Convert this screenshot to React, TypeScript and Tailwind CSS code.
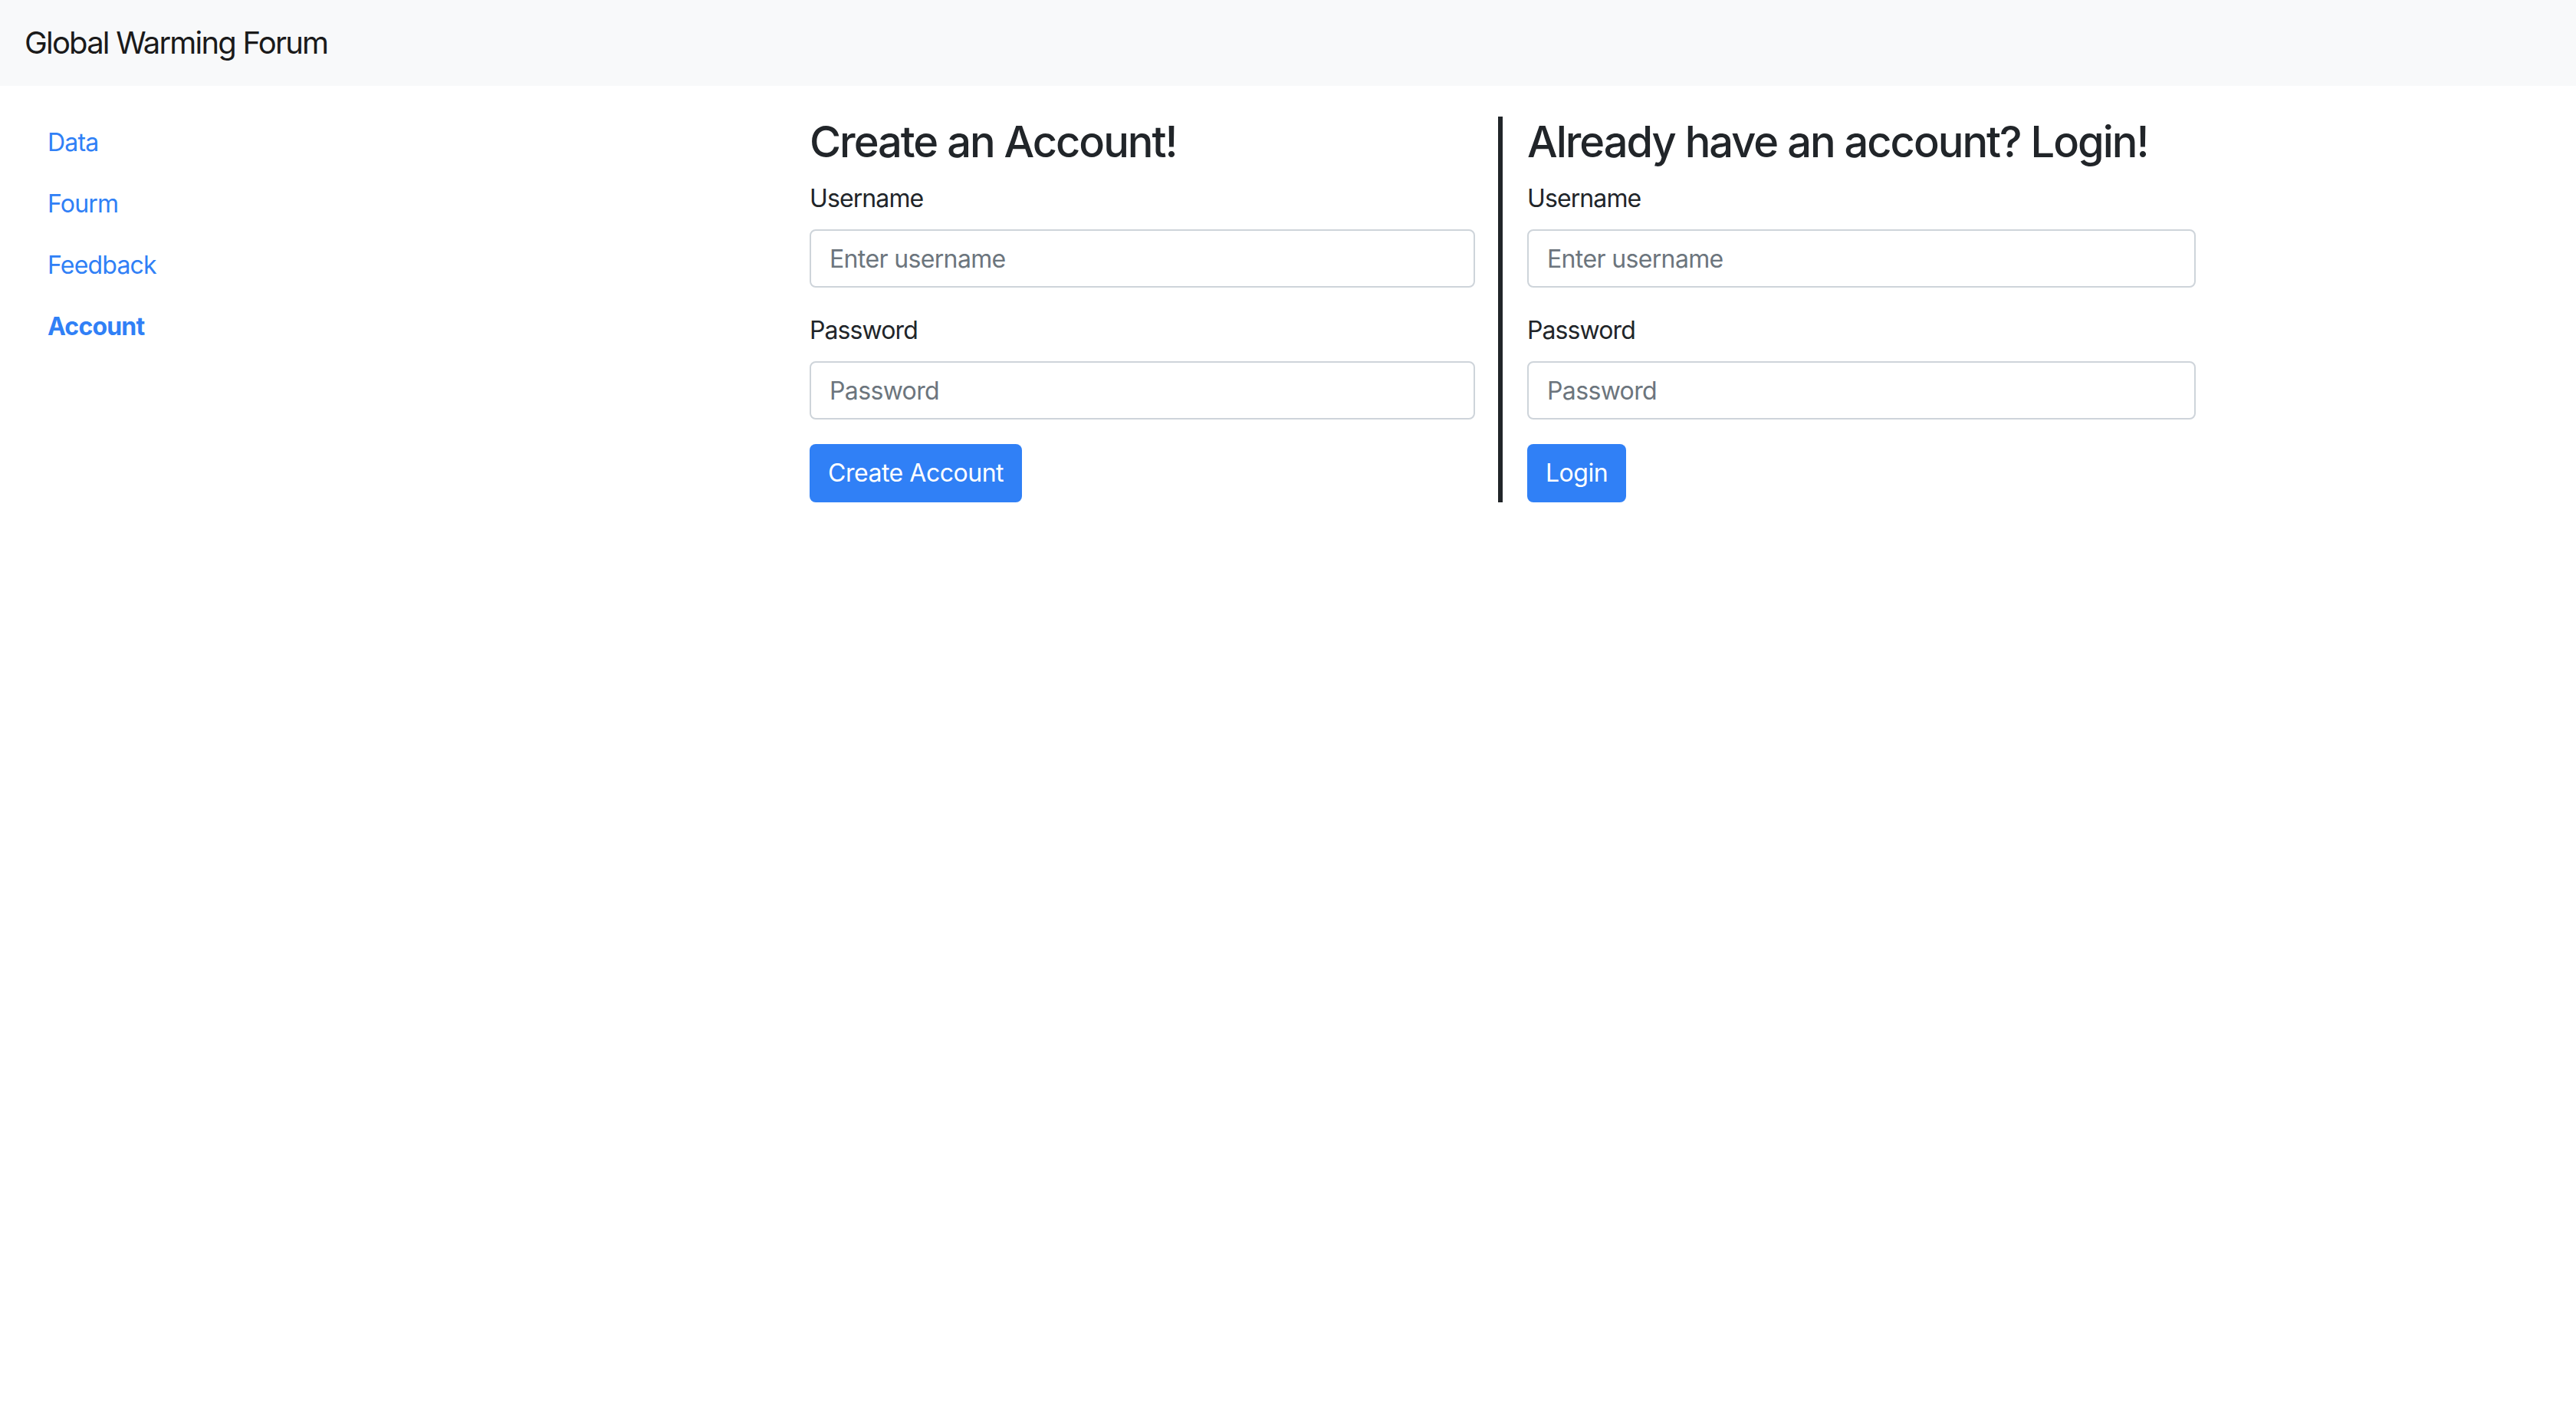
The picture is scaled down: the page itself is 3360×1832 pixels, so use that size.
import React, { useState } from "react";

const navLinks = ["Data", "Fourm", "Feedback", "Account"];

interface AuthFormProps {
  title: string;
  buttonLabel: string;
}

const AuthForm: React.FC<AuthFormProps> = ({ title, buttonLabel }) => {
  const [username, setUsername] = useState("");
  const [password, setPassword] = useState("");

  return (
    <form onSubmit={(e) => e.preventDefault()} className="flex flex-col">
      <h3 className="text-[56px] leading-[1.2] font-medium tracking-[-0.036em] text-[#212529] mb-[16px]">{title}</h3>
      <label className="text-[32px] leading-[48px] tracking-[-0.028em] text-[#212529] mb-[16px]">Username</label>
      <input
        type="text"
        placeholder="Enter username"
        value={username}
        onChange={(e) => setUsername(e.target.value)}
        className="h-[76px] w-full px-[24px] text-[32px] tracking-[-0.02em] text-[#495057] placeholder:text-[#6c757d] border-2 border-[#ced4da] rounded-[8px] outline-none mb-[32px]"
      />
      <label className="text-[32px] leading-[48px] tracking-[-0.028em] text-[#212529] mb-[16px]">Password</label>
      <input
        type="password"
        placeholder="Password"
        value={password}
        onChange={(e) => setPassword(e.target.value)}
        className="h-[76px] w-full px-[24px] text-[32px] tracking-[-0.02em] text-[#495057] placeholder:text-[#6c757d] border-2 border-[#ced4da] rounded-[8px] outline-none mb-[32px]"
      />
      <div>
        <button type="submit" className="h-[76px] px-[24px] text-[32px] tracking-[-0.015em] text-white bg-[#3080f6] rounded-[8px]">
          {buttonLabel}
        </button>
      </div>
    </form>
  );
};

export default function App() {
  return (
    <div className="min-h-screen bg-white" style={{ fontFamily: "Inter, 'Noto Sans', sans-serif" }}>
      <nav className="h-[112px] bg-[#f8f9fa] flex items-center px-[32px]">
        <span className="text-[40px] leading-[60px] tracking-[-0.045em] text-[#1a1a1a]">Global Warming Forum</span>
      </nav>
      <div className="flex">
        <div className="w-[1056px] shrink-0 pl-[30px] pt-[34px]">
          <ul className="flex flex-col">
            {navLinks.map((link) => (
              <li key={link}>
                <a
                  href="#"
                  className={
                    "block px-[32px] py-[16px] text-[32px] leading-[48px] tracking-[-0.025em] text-[#3080f6] " +
                    (link === "Account" ? "font-bold" : "")
                  }
                >
                  {link}
                </a>
              </li>
            ))}
          </ul>
        </div>
        <div className="flex items-start mt-[40px]">
          <div className="w-[868px]">
            <AuthForm title="Create an Account!" buttonLabel="Create Account" />
          </div>
          <div className="ml-[30px] border-l-[6px] border-[#212529] pl-[32px] w-[910px]">
            <AuthForm title="Already have an account? Login!" buttonLabel="Login" />
          </div>
        </div>
      </div>
    </div>
  );
}
